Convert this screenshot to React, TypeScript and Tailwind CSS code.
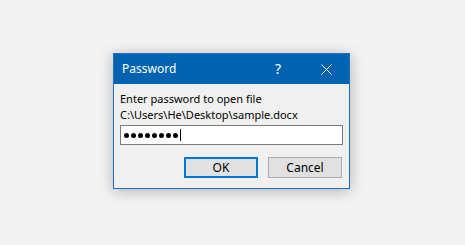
const FONT = "font-['Segoe_UI','Noto_Sans','Liberation_Sans',sans-serif]";

function CloseGlyph() {
  return (
    <svg width="11" height="11" viewBox="0 0 11 11" aria-hidden>
      <path d="M0.5 0.5 L10.5 10.5 M10.5 0.5 L0.5 10.5" stroke="white" strokeWidth="1" fill="none" />
    </svg>
  );
}

export default function App() {
  return (
    <div className={`h-[245px] w-[465px] bg-[#f3f3f3] pl-[113px] pt-[53px] ${FONT}`}>
      <div className="flex w-[237px] flex-col border border-[#1d6fbf] bg-[#f0f0f0] shadow-[0_2px_14px_rgba(0,0,0,0.28)]">
        {/* title bar */}
        <div className="flex h-[30px] items-center bg-[#0063b1] text-white">
          <span className="pl-[8px] text-[12px] leading-none">Password</span>
          <span className="ml-auto mr-[40px] text-[14px] leading-none">?</span>
          <span className="mr-[17px] flex items-center">
            <CloseGlyph />
          </span>
        </div>

        {/* body */}
        <div className="flex flex-col px-[6px] pb-[10px] pt-[7px] text-[11px] text-black">
          <p className="leading-[15px]">Enter password to open file</p>
          <p className="leading-[17px]">C:\Users\He\Desktop\sample.docx</p>
          <div className="mt-[2px] flex h-[20px] items-center border border-[#7a7a7a] bg-white pl-[3px]">
            <div className="flex gap-[2px]">
              {Array.from({ length: 8 }).map((_, i) => (
                <span key={i} className="size-[5px] rounded-full bg-black" />
              ))}
            </div>
            <span className="ml-[2px] h-[12px] w-px bg-black" />
          </div>
          <div className="mt-[12px] flex justify-end gap-[10px] pr-px">
            <button className="h-[21px] w-[74px] border-2 border-[#0078d7] bg-[#e1e1e1] text-[12px] leading-none">
              OK
            </button>
            <button className="h-[21px] w-[74px] border border-[#adadad] bg-[#e1e1e1] text-[12px] leading-none">
              Cancel
            </button>
          </div>
        </div>
      </div>
    </div>
  );
}
